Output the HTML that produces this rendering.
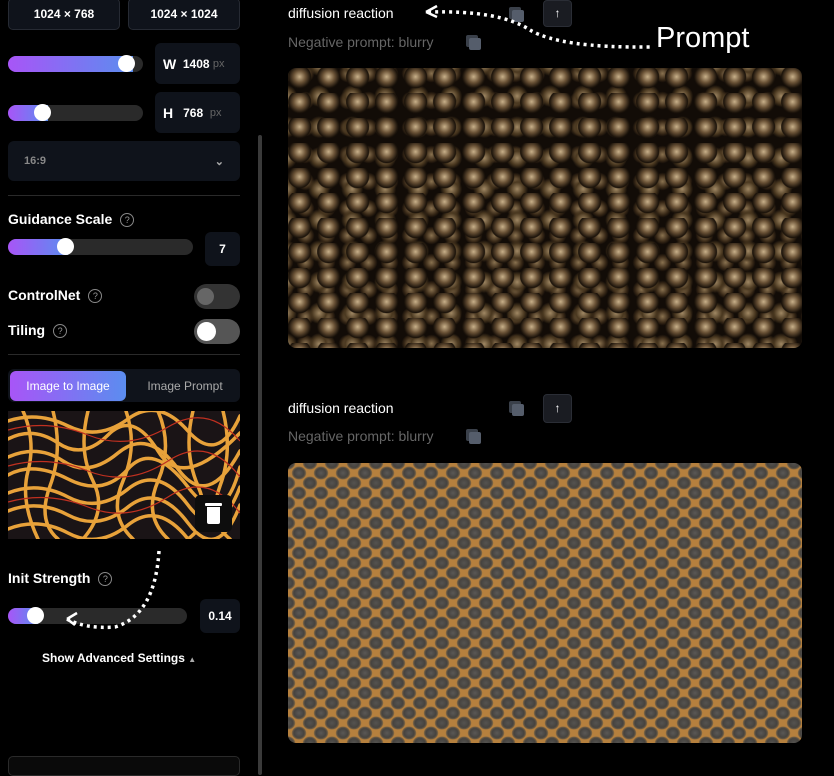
<!DOCTYPE html>
<html><head><style>
*{box-sizing:border-box;margin:0;padding:0}
body{width:834px;height:766px;background:#000;font-family:"Liberation Sans",sans-serif;color:#fff;position:relative;overflow:hidden}
.a{position:absolute}
.btn{background:#0f131b;border:1px solid #262a33;border-radius:5px;font-weight:bold;font-size:12px;display:flex;align-items:center;justify-content:center}
.box{background:#0f131b;border-radius:6px;font-weight:bold;font-size:12px;display:flex;align-items:center;justify-content:center}
.track{background:#2a2a2a;border-radius:8px;height:16px;overflow:hidden}
.fill{height:100%;background:linear-gradient(90deg,#a855f7,#5b8def)}
.knob{width:17px;height:17px;border-radius:50%;background:#fff}
.lbl{font-weight:bold;font-size:14px}
.q{display:inline-block;width:14px;height:14px;border:1px solid #888;border-radius:50%;font-size:9px;color:#999;text-align:center;line-height:12px;font-weight:normal;vertical-align:middle;margin-left:8px}
.tg{width:46px;height:25px;border-radius:13px;background:#333}
.cp{width:12px;height:12px;background:#555d6b;border-radius:2px;box-shadow:-3px -3px 0 #3a404a}
</style></head><body>
<div class="a btn" style="left:8px;top:-2px;width:112px;height:32px">1024 × 768</div>
<div class="a btn" style="left:128px;top:-2px;width:112px;height:32px">1024 × 1024</div>
<div class="a track" style="left:8px;top:56px;width:135px"><div class="fill" style="width:125px"></div></div>
<div class="a knob" style="left:118px;top:55px"></div>
<div class="a box" style="left:155px;top:43px;width:85px;height:41px;justify-content:flex-start;padding-left:8px"><span style="font-size:14px">W</span>&nbsp;&nbsp;1408&nbsp;<span style="color:#666;font-weight:normal;font-size:11px">px</span></div>
<div class="a track" style="left:8px;top:105px;width:135px"><div class="fill" style="width:40px"></div></div>
<div class="a knob" style="left:34px;top:104px"></div>
<div class="a box" style="left:155px;top:92px;width:85px;height:41px;justify-content:flex-start;padding-left:8px"><span style="font-size:14px">H</span>&nbsp;&nbsp;&nbsp;768&nbsp;&nbsp;<span style="color:#666;font-weight:normal;font-size:11px">px</span></div>
<div class="a box" style="left:8px;top:141px;width:232px;height:40px;justify-content:space-between;padding:0 16px;color:#888;font-size:11px">16:9<span style="color:#aaa">⌄</span></div>
<div class="a" style="left:8px;top:195px;width:232px;height:1px;background:#2a2a2a"></div>
<div class="a lbl" style="left:8px;top:211px">Guidance Scale<span class="q">?</span></div>
<div class="a track" style="left:8px;top:239px;width:185px"><div class="fill" style="width:60px"></div></div>
<div class="a knob" style="left:57px;top:238px"></div>
<div class="a box" style="left:205px;top:232px;width:35px;height:34px">7</div>
<div class="a lbl" style="left:8px;top:287px">ControlNet<span class="q">?</span></div>
<div class="a tg" style="left:194px;top:284px"><div class="knob" style="margin:4px 0 0 3px;background:#666"></div></div>
<div class="a lbl" style="left:8px;top:322px">Tiling<span class="q">?</span></div>
<div class="a tg" style="left:194px;top:319px;background:#555"><div class="knob" style="margin:4px 0 0 3px;width:19px;height:19px;margin-top:3px"></div></div>
<div class="a" style="left:8px;top:354px;width:232px;height:1px;background:#2a2a2a"></div>
<div class="a" style="left:8px;top:369px;width:232px;height:33px;background:#0f131b;border-radius:6px"></div>
<div class="a" style="left:10px;top:371px;width:116px;height:30px;border-radius:6px;background:linear-gradient(90deg,#a855f7,#5b8def);font-size:12px;display:flex;align-items:center;justify-content:center">Image to Image</div>
<div class="a" style="left:130px;top:371px;width:110px;height:30px;color:#aaa;font-size:12px;display:flex;align-items:center;justify-content:center">Image Prompt</div>
<svg class="a" style="left:8px;top:411px" width="232" height="128" viewBox="0 0 232 128">
<rect width="232" height="128" fill="#1a1416"/>
<g fill="none" stroke="#e8a23a" stroke-width="3.5" stroke-linecap="round">
<path d="M0 10 Q30 0 60 15 T120 8 T180 20 T232 5"/><path d="M0 28 Q25 15 50 32 T100 24 T150 40 T232 22"/><path d="M0 46 Q30 33 55 50 T110 42 T170 58 T232 40"/><path d="M0 64 Q25 50 60 68 T120 58 T180 76 T232 56"/><path d="M0 82 Q30 70 60 86 T120 78 T180 94 T232 76"/><path d="M0 100 Q30 88 60 104 T120 96 T180 112 T232 94"/><path d="M0 118 Q30 106 60 122 T120 114 T180 128"/>
<path d="M15 0 Q28 30 20 60 T30 128"/><path d="M45 0 Q55 40 42 75 T50 128"/><path d="M80 0 Q70 40 85 70 T75 128"/><path d="M118 0 Q130 35 115 70 T125 128"/><path d="M150 0 Q165 35 150 70 T160 128"/><path d="M185 0 Q175 40 190 75 T180 128"/><path d="M215 0 Q225 40 212 75 T222 128"/>
</g>
<g fill="none" stroke="#c03020" stroke-width="1.2"><path d="M0 19 Q40 8 80 24 T160 16 T232 30"/><path d="M0 55 Q40 44 80 60 T160 50 T232 66"/><path d="M0 91 Q40 80 80 96 T160 86 T232 102"/></g>
</svg>
<div class="a" style="left:195px;top:495px;width:37px;height:37px;background:#0d0d0d;border-radius:5px"></div>
<div class="a" style="left:205px;top:503px;width:17px;height:3px;background:#fff;border-radius:1px"></div>
<div class="a" style="left:207px;top:507px;width:13px;height:17px;background:#fff;border-radius:0 0 2px 2px"></div>
<div class="a lbl" style="left:8px;top:570px">Init Strength<span class="q">?</span></div>
<div class="a track" style="left:8px;top:608px;width:179px"><div class="fill" style="width:30px"></div></div>
<div class="a knob" style="left:27px;top:607px"></div>
<div class="a box" style="left:200px;top:599px;width:40px;height:34px">0.14</div>
<div class="a" style="left:42px;top:651px;font-size:12px;font-weight:bold">Show Advanced Settings <span style="font-size:8px;color:#aaa">▲</span></div>
<svg class="a" style="left:55px;top:545px" width="110" height="90"><path d="M104 6 Q100 70 60 82 Q30 84 12 74" fill="none" stroke="#fff" stroke-width="3.5" stroke-dasharray="3 4"/><path d="M12 74 L22 68 M12 74 L20 80" stroke="#fff" stroke-width="2.5"/></svg>
<div class="a" style="left:8px;top:756px;width:232px;height:20px;border:1px solid #2a2a2a;border-radius:5px;background:#0a0a0a"></div>
<div class="a" style="left:258px;top:135px;width:4px;height:640px;background:#3a3a3a;border-radius:2px"></div>

<div class="a" style="left:288px;top:5px;font-size:14px">diffusion reaction</div>
<div class="a" style="left:288px;top:34px;font-size:14px;color:#666">Negative prompt: blurry</div>
<div class="a cp" style="left:512px;top:10px"></div>
<div class="a cp" style="left:469px;top:38px"></div>
<div class="a" style="left:543px;top:0;width:29px;height:27px;background:#1a1c22;border-radius:4px;border:1px solid #2a2d35;font-size:12px;text-align:center;line-height:24px">↑</div>
<svg class="a" style="left:420px;top:0" width="240" height="60"><path d="M8 12 Q80 10 110 30 Q140 48 230 47" fill="none" stroke="#fff" stroke-width="3.5" stroke-dasharray="3 4"/><path d="M6 12 L17 6 M6 12 L17 17" stroke="#fff" stroke-width="2.5"/></svg>
<div class="a" style="left:656px;top:22px;font-size:29px">Prompt</div>
<div class="a" style="left:288px;top:68px;width:514px;height:280px;border-radius:8px;background:radial-gradient(circle at 40% 35%,#c8b08a 0,#6a5236 6px,#1a120a 11px,transparent 12px) 0 0/29px 25px,radial-gradient(circle at 55% 55%,#a08864 0,#4a3820 7px,transparent 11px) 13px 11px/33px 31px,radial-gradient(circle at 50% 50%,#8a7250 0,#3a2a18 6px,transparent 9px) 7px 19px/21px 27px,#120c07"></div>
<div class="a" style="left:288px;top:400px;font-size:14px">diffusion reaction</div>
<div class="a" style="left:288px;top:428px;font-size:14px;color:#666">Negative prompt: blurry</div>
<div class="a cp" style="left:512px;top:404px"></div>
<div class="a cp" style="left:469px;top:432px"></div>
<div class="a" style="left:543px;top:394px;width:29px;height:29px;background:#1a1c22;border-radius:4px;border:1px solid #2a2d35;font-size:12px;text-align:center;line-height:26px">↑</div>
<div class="a" style="left:288px;top:463px;width:514px;height:280px;border-radius:8px;background:radial-gradient(ellipse at 50% 50%,#5a5856 0,#46433f 5px,#6a5a44 6.5px,transparent 7.5px) 0 0/22px 20px,radial-gradient(ellipse at 50% 50%,#555350 0,#46433f 5px,#6a5a44 6.5px,transparent 7.5px) 11px 10px/22px 20px,#b5803e"></div>
</body></html>
